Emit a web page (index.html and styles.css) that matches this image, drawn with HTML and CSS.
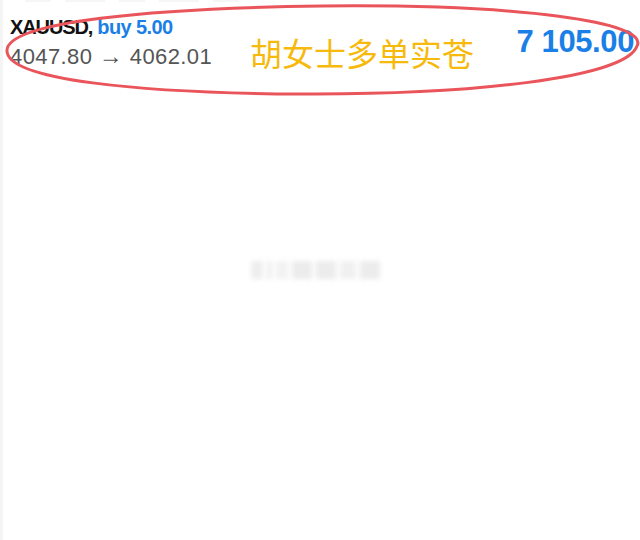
FILE: index.html
```html
<!DOCTYPE html>
<html>
<head>
<meta charset="utf-8">
<link rel="stylesheet" href="styles.css">
</head>
<body>
<div class="page">
  <div class="prev"><span class="pb"></span><span class="pb w"></span><span class="pb"></span><span class="pb w"></span><span class="pb"></span></div>
  <div class="trade">
    <div class="left">
      <div class="title"><span class="sym">XAUUSD,</span> <span class="side">buy 5.00</span></div>
      <div class="prices">4047.80 <span class="arrow">→</span> 4062.01</div>
    </div>
    <div class="note">胡女士多单实苍</div>
    <div class="profit">7 105.00</div>
    <svg class="circle" width="640" height="100" viewBox="0 0 640 100">
      <path d="M322 6 C 520 4, 650 22, 637 46 C 626 78, 470 95, 300 94 C 140 93, 5 80, 7 50 C 9 22, 150 8, 322 6 Z" fill="none" stroke="#e9555a" stroke-width="3"/>
    </svg>
  </div>
  <div class="watermark"><span class="wm"></span><span class="wm a"></span><span class="wm b"></span><span class="wm c"></span><span class="wm c"></span><span class="wm d"></span><span class="wm c"></span></div>
</div>
</body>
</html>
```
FILE: styles.css
```css
html, body {
  margin: 0;
  padding: 0;
  background: #ffffff;
}
.page {
  width: 637px;
  min-height: 540px;
  border-left: 3px solid #f4f4f4;
  font-family: "Liberation Sans", Arial, sans-serif;
  overflow: hidden;
  position: relative;
}
.prev {
  display: flex;
  gap: 14px;
  height: 3px;
  padding-left: 22px;
}
.pb {
  display: block;
  width: 26px;
  height: 2px;
  background: #f6f6f6;
}
.pb.w {
  width: 40px;
}
.trade {
  position: relative;
  display: flex;
  align-items: flex-start;
  padding: 12px 0 0 7px;
  height: 85px;
}
.left {
  width: 240px;
}
.title {
  font-size: 20px;
  font-weight: bold;
  line-height: 24px;
  letter-spacing: -0.6px;
}
.sym {
  color: #111111;
  letter-spacing: -1.1px;
}
.side {
  color: #1a7fe6;
}
.prices {
  margin-top: 4px;
  font-size: 22px;
  line-height: 26px;
  color: #555555;
  letter-spacing: 0.4px;
}
.arrow {
  font-size: 24px;
}
.note {
  margin-top: 19px;
  font-family: "Noto Sans CJK SC", sans-serif;
  font-size: 32px;
  line-height: 36px;
  color: #f6b90c;
}
.profit {
  margin-left: auto;
  margin-top: 9px;
  margin-right: 6px;
  font-size: 31px;
  line-height: 36px;
  font-weight: bold;
  color: #1a7fe6;
  letter-spacing: -0.4px;
}
.circle {
  position: absolute;
  left: -3px;
  top: -3px;
  pointer-events: none;
}
.watermark {
  display: flex;
  gap: 4px;
  margin: 158px 0 0 248px;
  height: 24px;
  align-items: center;
  filter: blur(2.5px);
}
.wm {
  display: block;
  width: 12px;
  height: 18px;
  background: #eeeeee;
}
.wm.a { width: 5px; }
.wm.b { width: 12px; background: #f2f2f2; }
.wm.c { width: 20px; background: #ececec; }
.wm.d { width: 16px; background: #f0f0f0; }
```
